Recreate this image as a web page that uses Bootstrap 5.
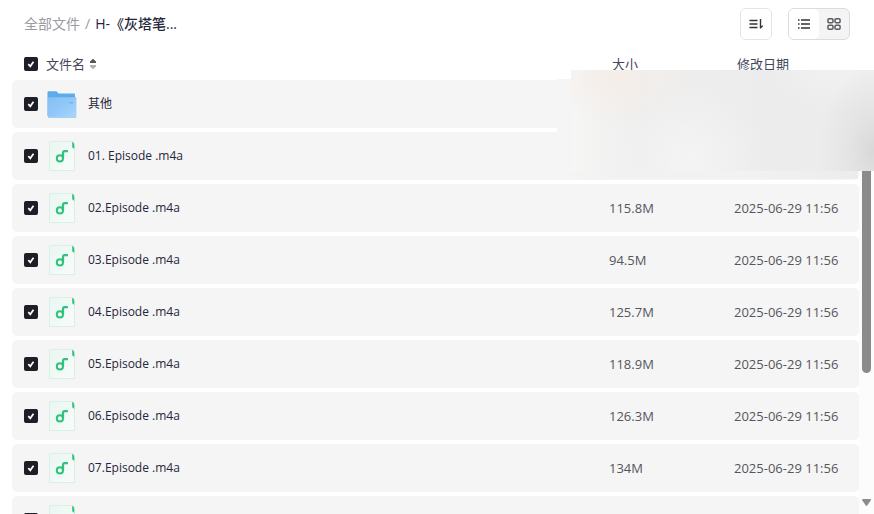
<!DOCTYPE html>
<html lang="zh-CN">
<head>
<meta charset="utf-8">
<meta name="viewport" content="width=device-width, initial-scale=1">
<title>全部文件</title>
<link href="https://cdn.jsdelivr.net/npm/bootstrap@5.3.0/dist/css/bootstrap.min.css" rel="stylesheet">
<style>
  body { font-family: "Open Sans", "Noto Sans CJK SC", sans-serif; font-size: 13px; line-height: 20px; color: #25263b; background: #fff; }
  .toolbar { height: 48px; padding: 0 24px; }
  .crumbs { font-size: 14px; color: #9a9aa2; gap: 5px; }
  .crumbs a { color: #9a9aa2; }
  .crumbs .current { color: #25263b; font-weight: 500; }
  .tool-btn { width: 32px; height: 32px; border: 1px solid #e4e4e6; border-radius: 6px; background: #fff; color: #333338; }
  .view-switch { height: 32px; border: 1px solid #dcdcde; border-radius: 6px; background: #f4f4f5; overflow: hidden; }
  .view-switch button { width: 30px; border: 0; background: transparent; color: #5c5c60; }
  .view-switch button.active { background: #fff; color: #333338; border-radius: 0 5px 5px 0; }
  .file-area { margin-left: 12px; min-height: 0; overflow: hidden; }
  .file-table { border-collapse: separate; border-spacing: 0 4px; table-layout: fixed; }
  .file-table th { height: 24px; padding: 0; font-weight: 400; color: #45465a; }
  .file-table td { height: 48px; padding: 0; background: #f5f5f5; color: #55555c; }
  .file-table td:first-child { border-radius: 5px 0 0 5px; color: #25263b; font-size: 12px; }
  .file-table td:last-child { border-radius: 0 5px 5px 0; }
  .file-table .size-col { width: 125px; }
  .file-table .date-col { width: 125px; }
  .file-table th.head-pad { padding-left: 3px; }
  .name-cell { padding-left: 12px; gap: 8px; }
  .pick.form-check-input { width: 14px; height: 14px; margin: 0; border: 0; border-radius: 2px; background-size: 14px 14px; }
  .pick.form-check-input:checked { background-color: #1e1f26; background-image: url("data:image/svg+xml,%3Csvg xmlns='http://www.w3.org/2000/svg' viewBox='0 0 14 14'%3E%3Cpath d='M4.3 7.1l2 2.2 3.2-4.5' fill='none' stroke='%23fff' stroke-width='1.7'/%3E%3C/svg%3E"); }
  .file-icon { width: 32px; height: 32px; margin-right: 2px; }
  .sort-btn { width: 8px; height: 12px; margin-left: -4px; }
  .scroll-track { width: 15px; margin-top: 32px; padding-top: 16px; background: #fcfcfc; }
  .scroll-thumb { width: 9px; height: 277px; flex-shrink: 0; border-radius: 5px; background: #8b8b8b; }
  .scroll-end { margin-top: 126px; flex-shrink: 0; }
  .haze-back { top: 31px; right: 16px; width: 301px; height: 100px; background: linear-gradient(90deg, #f5f5f5, #f1f1f1 25%, #f2f2f2 60%, #ececec); }
  .haze-front { top: 22px; right: 0; width: 303px; height: 101px;
    background:
      radial-gradient(ellipse 56px 85px at 100% 80%, #d8d8d8, rgba(222,222,222,.6) 45%, rgba(236,236,236,0)),
      radial-gradient(ellipse 75px 45px at 16% 10%, rgba(245,237,231,.9), rgba(245,237,231,0)),
      radial-gradient(ellipse 75px 75px at 39% 88%, #f4f4f4, rgba(240,240,240,0)),
      radial-gradient(ellipse 70px 40px at 88% 0, #f1f1f1, rgba(241,241,241,0)),
      linear-gradient(90deg, #f6f6f5, #eeeeee 24%, #ececec 70%, #ededed); }
</style>
<script src="https://cdn.jsdelivr.net/npm/bootstrap@5.3.0/dist/js/bootstrap.bundle.min.js"></script>
</head>
<body class="vh-100 overflow-hidden d-flex flex-column">

<svg class="position-absolute" width="0" height="0" aria-hidden="true">
  <defs>
    <linearGradient id="folderFill" x1="0" y1="0" x2="1" y2="1">
      <stop offset="0" stop-color="#85bff3"/><stop offset=".5" stop-color="#92c8f8"/><stop offset="1" stop-color="#acd6fb"/>
    </linearGradient>
    <linearGradient id="sheetFill" x1="0" y1="0" x2="1" y2="1">
      <stop offset="0" stop-color="#e9f6f1"/><stop offset="1" stop-color="#f8fcfa"/>
    </linearGradient>
  </defs>
  <symbol id="icon-folder" viewBox="0 0 32 32">
    <path d="M1.5 4.2q0-1 1-1H10q.7 0 1.1.6l1.3 1.6H28q1 0 1 1V28H1.5z" fill="#5eabea"/>
    <path d="M2.8 9.2H29.5q.9 0 .9.9V29q0 .9-.9.9H2.8q-.9 0-.9-.9V10.100q0-.9.9-.9z" fill="url(#folderFill)"/>
    <path d="M23.500 14h3.500v1.500h-3.500z" fill="#73b3ec"/>
    <path d="M2 29.500H30" stroke="#a5cff4" fill="none"/>
  </symbol>
  <symbol id="icon-music" viewBox="0 0 32 32">
    <path d="M4.500 1.500H27.500L28.500 7.500V30.500H3.500V2.500q0-1 1-1z" fill="url(#sheetFill)" stroke="#d8f0e5"/>
    <path d="M26.200 1.700q2.100 1 2.100 3v4q-2.100-.4-2.100-2.500z" fill="#2fc27b"/>
    <circle cx="13.900" cy="18.400" r="3.100" fill="none" stroke="#30c27c" stroke-width="2"/>
    <path d="M17 18.600V13q0-1.800 1.700-1.800h3.200" fill="none" stroke="#30c27c" stroke-width="2.200"/>
  </symbol>
</svg>

<header class="toolbar d-flex align-items-center justify-content-between flex-shrink-0">
  <nav class="crumbs d-flex" aria-label="路径">
    <a href="#" class="text-decoration-none">全部文件</a><span>/</span><span class="current">H-《灰塔笔...</span>
  </nav>
  <div class="d-flex gap-3">
    <button type="button" class="tool-btn p-0 d-flex align-items-center justify-content-center" aria-label="排序">
      <svg width="16" height="16" viewBox="0 0 16 16" fill="none" stroke="currentColor" stroke-width="1.4"><path d="M1.500 4.500h8M1.500 8h8M1.500 11.500h8M12.500 3v9.500M12 12.300l2.700-2.500"/></svg>
    </button>
    <div class="view-switch d-flex" role="group" aria-label="视图">
      <button type="button" class="active p-0 d-flex align-items-center justify-content-center" aria-label="列表">
        <svg width="14" height="14" viewBox="0 0 14 14" fill="none" stroke="currentColor" stroke-width="1.300"><path d="M1 3h1.500M4 3h9M1 7h1.500M4 7h9M1 11h1.500M4 11h9"/></svg>
      </button>
      <button type="button" class="p-0 d-flex align-items-center justify-content-center" aria-label="网格">
        <svg width="14" height="14" viewBox="0 0 14 14" fill="none" stroke="currentColor" stroke-width="1.500"><rect x=".9" y="1.700" width="5.100" height="4.100" rx="1.200"/><rect x="8" y="1.700" width="5.100" height="4.100" rx="1.200"/><rect x=".9" y="8.200" width="5.100" height="4.100" rx="1.200"/><rect x="8" y="8.200" width="5.100" height="4.100" rx="1.200"/></svg>
      </button>
    </div>
  </div>
</header>

<main class="file-area d-flex align-items-start position-relative flex-grow-1">
  <div class="flex-grow-1">
    <table class="file-table w-100">
      <colgroup><col><col class="size-col"><col class="date-col"></colgroup>
      <thead>
        <tr>
          <th scope="col"><div class="name-cell d-flex align-items-center"><input type="checkbox" class="pick form-check-input" id="all" checked><label for="all">文件名</label>
            <button type="button" class="sort-btn border-0 bg-transparent p-0 d-flex" aria-label="按文件名排序"><svg width="8" height="12" viewBox="0 0 8 12"><path d="M4 .8l3 2.800v1.400H1V3.600z" fill="#55555a"/><path d="M4 11.200L1 8.400V7h6v1.400z" fill="#b0b0b4"/></svg></button></div></th>
          <th scope="col" class="head-pad">大小</th>
          <th scope="col" class="head-pad">修改日期</th>
        </tr>
      </thead>
      <tbody>
        <tr><td><div class="name-cell d-flex align-items-center"><input type="checkbox" class="pick form-check-input" id="f0" checked><svg class="file-icon"><use href="#icon-folder"/></svg><label for="f0">其他</label></div></td><td></td><td></td></tr>
        <tr><td><div class="name-cell d-flex align-items-center"><input type="checkbox" class="pick form-check-input" id="f1" checked><svg class="file-icon"><use href="#icon-music"/></svg><label for="f1">01. Episode .m4a</label></div></td><td></td><td></td></tr>
        <tr><td><div class="name-cell d-flex align-items-center"><input type="checkbox" class="pick form-check-input" id="f2" checked><svg class="file-icon"><use href="#icon-music"/></svg><label for="f2">02.Episode .m4a</label></div></td><td>115.8M</td><td>2025-06-29 11:56</td></tr>
        <tr><td><div class="name-cell d-flex align-items-center"><input type="checkbox" class="pick form-check-input" id="f3" checked><svg class="file-icon"><use href="#icon-music"/></svg><label for="f3">03.Episode .m4a</label></div></td><td>94.5M</td><td>2025-06-29 11:56</td></tr>
        <tr><td><div class="name-cell d-flex align-items-center"><input type="checkbox" class="pick form-check-input" id="f4" checked><svg class="file-icon"><use href="#icon-music"/></svg><label for="f4">04.Episode .m4a</label></div></td><td>125.7M</td><td>2025-06-29 11:56</td></tr>
        <tr><td><div class="name-cell d-flex align-items-center"><input type="checkbox" class="pick form-check-input" id="f5" checked><svg class="file-icon"><use href="#icon-music"/></svg><label for="f5">05.Episode .m4a</label></div></td><td>118.9M</td><td>2025-06-29 11:56</td></tr>
        <tr><td><div class="name-cell d-flex align-items-center"><input type="checkbox" class="pick form-check-input" id="f6" checked><svg class="file-icon"><use href="#icon-music"/></svg><label for="f6">06.Episode .m4a</label></div></td><td>126.3M</td><td>2025-06-29 11:56</td></tr>
        <tr><td><div class="name-cell d-flex align-items-center"><input type="checkbox" class="pick form-check-input" id="f7" checked><svg class="file-icon"><use href="#icon-music"/></svg><label for="f7">07.Episode .m4a</label></div></td><td>134M</td><td>2025-06-29 11:56</td></tr>
        <tr><td><div class="name-cell d-flex align-items-center"><input type="checkbox" class="pick form-check-input" id="f8" aria-label="第八集" checked><svg class="file-icon"><use href="#icon-music"/></svg></div></td><td></td><td></td></tr>
      </tbody>
    </table>
  </div>
  <div class="scroll-track align-self-stretch flex-shrink-0 d-flex flex-column align-items-center" aria-hidden="true">
    <div class="scroll-thumb"></div>
    <svg class="scroll-end" width="9" height="8" viewBox="0 0 9 8"><path d="M0 1q0-1 1-1h7q1 0 1 1L5.200 6.500q-.7.900-1.400 0z" fill="#8b8b8b"/></svg>
  </div>
  <div class="haze-back position-absolute"></div>
  <div class="haze-front position-absolute"></div>
</main>
</body>
</html>
